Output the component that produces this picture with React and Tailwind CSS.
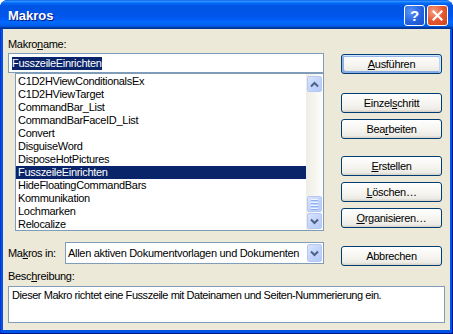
import React from 'react';

const macros = [
  'C1D2HViewConditionalsEx',
  'C1D2HViewTarget',
  'CommandBar_List',
  'CommandBarFaceID_List',
  'Convert',
  'DisguiseWord',
  'DisposeHotPictures',
  'FusszeileEinrichten',
  'HideFloatingCommandBars',
  'Kommunikation',
  'Lochmarken',
  'Relocalize',
];

const XpButton = ({ children, isDefault = false, className = '' }) => (
  <div
    className={`flex h-[20px] w-[101px] items-center justify-center rounded-[3px] border border-[#003C74] bg-[linear-gradient(180deg,#FFFFFF_0%,#F4F3EE_60%,#ECEBE6_86%,#D6D0C5_100%)] leading-none text-black ${
      isDefault
        ? 'shadow-[inset_-1px_1px_#cee7ff,inset_1px_2px_#98b8ea,inset_-2px_2px_#bcd4f6,inset_1px_-1px_#89ade4,inset_2px_-2px_#89ade4]'
        : ''
    } ${className}`}
  >
    {children}
  </div>
);

const Chevron = ({ up = false }) => (
  <svg width="9" height="7" viewBox="0 0 9 7">
    <polyline
      points={up ? '1,5.5 4.5,2 8,5.5' : '1,1.5 4.5,5 8,1.5'}
      fill="none"
      stroke="#4D6185"
      strokeWidth="2"
    />
  </svg>
);

const ArrowBox = ({ children, className = '' }) => (
  <div
    className={`mx-[1px] flex h-[16px] items-center justify-center rounded-[2px] border border-[#B7C9F3] bg-[linear-gradient(135deg,#D9E4FD_0%,#C4D5FC_50%,#B6CAF7_100%)] ${className}`}
  >
    {children}
  </div>
);

export default function App() {
  return (
    <div className="h-[334px] w-[453px] bg-white font-['Liberation_Sans',Arial,sans-serif] text-[11px] tracking-[-0.3px] text-black">
      <div className="flex h-full flex-col overflow-hidden rounded-t-[8px] bg-[#0054E3] shadow-[inset_-1px_-1px_#00138c,inset_1px_0_#0831d9]">
        {/* title bar */}
        <div className="flex h-[29px] shrink-0 items-center bg-[linear-gradient(180deg,#0058EE_0%,#3593FF_4%,#288EFF_6%,#127DFF_8%,#036FFC_10%,#0262EE_14%,#0057E5_20%,#0054E3_24%,#0055EB_56%,#005BF5_66%,#026AFE_76%,#0062EF_86%,#0052D6_92%,#0040AB_94%,#003092_100%)] pl-[8px] pr-[5px]">
          <span className="flex-1 pt-[3px] text-[13px] font-bold tracking-normal text-white [text-shadow:1px_1px_#0a1883]">
            Makros
          </span>
          <div className="flex gap-[2px] pt-[1px]">
            <div className="flex h-[21px] w-[21px] items-center justify-center rounded-[3px] border border-white bg-[radial-gradient(circle_at_30%_30%,#5B93F7_0%,#2663E0_55%,#1A4FC8_100%)] text-[15px] font-bold leading-none tracking-normal text-white">
              ?
            </div>
            <div className="flex h-[21px] w-[21px] items-center justify-center rounded-[3px] border border-white bg-[radial-gradient(circle_at_30%_30%,#F5A184_0%,#E5582F_50%,#CC431C_100%)]">
              <svg width="11" height="11" viewBox="0 0 11 11">
                <path d="M1.5 1.5 L9.5 9.5 M9.5 1.5 L1.5 9.5" stroke="white" strokeWidth="2.2" strokeLinecap="square" />
              </svg>
            </div>
          </div>
        </div>

        {/* client area */}
        <div className="mx-[3px] mb-[4px] flex flex-1 flex-col bg-[#ECE9D8] pl-[5px] pt-[9px]">
          <div className="flex">
            {/* left column */}
            <div className="flex w-[316px] flex-col">
              <div className="h-[13px] leading-[13px]">
                Makro<span className="underline">n</span>ame:
              </div>
              <div className="mt-[2px] flex h-[20px] items-center border border-[#7F9DB9] bg-white pl-[3px]">
                <span className="bg-[#0A246A] leading-[13px] text-white">FusszeileEinrichten</span>
              </div>
              <div className="ml-[7px] flex h-[158px] border border-[#7F9DB9] bg-white">
                <div className="flex-1 pt-[1px]">
                  {macros.map((m) => (
                    <div
                      key={m}
                      className={`h-[13px] whitespace-nowrap pl-[2px] leading-[13px] ${
                        m === 'FusszeileEinrichten' ? 'bg-[#0A246A] text-white' : ''
                      }`}
                    >
                      {m}
                    </div>
                  ))}
                </div>
                <div className="flex w-[17px] flex-col bg-[linear-gradient(90deg,#EEEDE5_0%,#FEFEFB_100%)] py-[1px]">
                  <ArrowBox className="mt-[1px]">
                    <Chevron up />
                  </ArrowBox>
                  <div className="flex flex-1 flex-col justify-end">
                    <ArrowBox className="flex-col gap-[2px]">
                      <div className="h-[1px] w-[7px] bg-[#EEF3FE] shadow-[0_1px_#8CB0F8]" />
                      <div className="h-[1px] w-[7px] bg-[#EEF3FE] shadow-[0_1px_#8CB0F8]" />
                      <div className="h-[1px] w-[7px] bg-[#EEF3FE] shadow-[0_1px_#8CB0F8]" />
                      <div className="h-[1px] w-[7px] bg-[#EEF3FE] shadow-[0_1px_#8CB0F8]" />
                    </ArrowBox>
                  </div>
                  <ArrowBox className="mt-[1px]">
                    <Chevron />
                  </ArrowBox>
                </div>
              </div>
            </div>

            {/* right buttons */}
            <div className="ml-[17px] flex flex-col pt-[16px]">
              <XpButton isDefault>
                <span><span className="underline">A</span>usführen</span>
              </XpButton>
              <XpButton className="mt-[19px]">
                <span>Einzel<span className="underline">s</span>chritt</span>
              </XpButton>
              <XpButton className="mt-[6px]">
                <span>Bea<span className="underline">r</span>beiten</span>
              </XpButton>
              <XpButton className="mt-[17px]">
                <span><span className="underline">E</span>rstellen</span>
              </XpButton>
              <XpButton className="mt-[6px]">
                <span><span className="underline">L</span>öschen…</span>
              </XpButton>
              <XpButton className="mt-[6px]">
                <span><span className="underline">O</span>rganisieren…</span>
              </XpButton>
            </div>
          </div>

          {/* Makros in row */}
          <div className="mt-[11px] flex items-start">
            <div className="flex h-[22px] w-[57px] items-center">
              Ma<span className="underline">k</span>ros in:
            </div>
            <div className="flex h-[22px] w-[259px] items-center border border-[#7F9DB9] bg-white">
              <span className="flex-1 overflow-hidden whitespace-nowrap pl-[2px]">
                Allen aktiven Dokumentvorlagen und Dokumenten
              </span>
              <div className="mr-[1px] flex h-[18px] w-[15px] shrink-0 items-center justify-center rounded-[2px] border border-[#B7C9F3] bg-[linear-gradient(135deg,#D9E4FD_0%,#C4D5FC_50%,#B6CAF7_100%)]">
                <Chevron />
              </div>
            </div>
            <XpButton className="ml-[17px] mt-[4px]">Abbrechen</XpButton>
          </div>

          {/* description */}
          <div className="mt-[4px] h-[13px] leading-[13px]">
            Besc<span className="underline">h</span>reibung:
          </div>
          <div className="mt-[3px] h-[37px] w-[437px] border border-[#7F9DB9] bg-white pl-[3px] pt-[2px] leading-[13px] tracking-[-0.45px]">
            Dieser Makro richtet eine Fusszeile mit Dateinamen und Seiten-Nummerierung ein.
          </div>
        </div>
      </div>
    </div>
  );
}
